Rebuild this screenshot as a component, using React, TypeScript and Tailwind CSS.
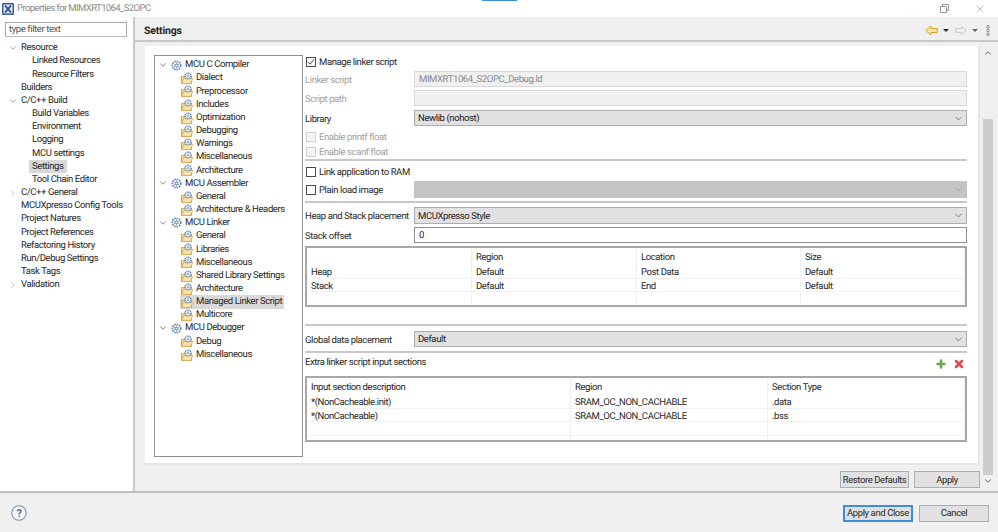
import { ChevronDown, ChevronRight, ChevronUp, Minus, X, Plus } from 'lucide-react'

const font = "[font-family:'Roboto',sans-serif] [text-rendering:geometricPrecision]"

type Node = { label: string; level: number; open?: boolean; closed?: boolean; selected?: boolean }

const nav: Node[] = [
  { label: 'Resource', level: 1, open: true },
  { label: 'Linked Resources', level: 2 },
  { label: 'Resource Filters', level: 2 },
  { label: 'Builders', level: 1 },
  { label: 'C/C++ Build', level: 1, open: true },
  { label: 'Build Variables', level: 2 },
  { label: 'Environment', level: 2 },
  { label: 'Logging', level: 2 },
  { label: 'MCU settings', level: 2 },
  { label: 'Settings', level: 2, selected: true },
  { label: 'Tool Chain Editor', level: 2 },
  { label: 'C/C++ General', level: 1, closed: true },
  { label: 'MCUXpresso Config Tools', level: 1 },
  { label: 'Project Natures', level: 1 },
  { label: 'Project References', level: 1 },
  { label: 'Refactoring History', level: 1 },
  { label: 'Run/Debug Settings', level: 1 },
  { label: 'Task Tags', level: 1 },
  { label: 'Validation', level: 1, closed: true },
]

const tools: Node[] = [
  { label: 'MCU C Compiler', level: 1 },
  { label: 'Dialect', level: 2 },
  { label: 'Preprocessor', level: 2 },
  { label: 'Includes', level: 2 },
  { label: 'Optimization', level: 2 },
  { label: 'Debugging', level: 2 },
  { label: 'Warnings', level: 2 },
  { label: 'Miscellaneous', level: 2 },
  { label: 'Architecture', level: 2 },
  { label: 'MCU Assembler', level: 1 },
  { label: 'General', level: 2 },
  { label: 'Architecture & Headers', level: 2 },
  { label: 'MCU Linker', level: 1 },
  { label: 'General', level: 2 },
  { label: 'Libraries', level: 2 },
  { label: 'Miscellaneous', level: 2 },
  { label: 'Shared Library Settings', level: 2 },
  { label: 'Architecture', level: 2 },
  { label: 'Managed Linker Script', level: 2, selected: true },
  { label: 'Multicore', level: 2 },
  { label: 'MCU Debugger', level: 1 },
  { label: 'Debug', level: 2 },
  { label: 'Miscellaneous', level: 2 },
]

function GearIcon() {
  return (
    <svg width="11" height="11" viewBox="0 0 11 11" className="shrink-0">
      <circle cx="5.5" cy="5.5" r="4.3" fill="#eef3f8" stroke="#5f83a8" strokeWidth="1.6" strokeDasharray="1.5 1" />
      <path d="M5.5 2.5v6M2.8 4l5.4 3M2.8 7l5.4-3" stroke="#6f8fb0" strokeWidth="0.8" />
      <circle cx="5.5" cy="5.5" r="1.2" fill="#fff" stroke="#47688c" strokeWidth="0.6" />
    </svg>
  )
}

function FolderIcon() {
  return (
    <svg width="12" height="12" viewBox="0 0 12 12" className="shrink-0">
      <path d="M0.5 11.5V4.5h2l1-1h2l1 1h4v7z" fill="#f6d58c" stroke="#c9953f" strokeWidth="0.8" />
      <path d="M0.7 11.5 2.7 6.5h9l-2 5z" fill="#fbe3a8" stroke="#d6a44f" strokeWidth="0.7" />
      <circle cx="7" cy="4" r="3" fill="#e9f0f6" stroke="#5f83a8" strokeWidth="1.3" strokeDasharray="1.2 0.8" />
      <circle cx="7" cy="4" r="1" fill="#fff" stroke="#47688c" strokeWidth="0.5" />
    </svg>
  )
}

function Check({ checked, disabled }: { checked?: boolean; disabled?: boolean }) {
  return (
    <span className={`flex h-[10px] w-[10px] shrink-0 items-center justify-center border ${disabled ? 'border-[#d0d0d0] bg-[#f4f4f4]' : 'border-[#4a4a4a] bg-white'}`}>
      {checked && (
        <svg width="8" height="8" viewBox="0 0 8 8">
          <path d="M1 4l2 2.2L7 1.2" fill="none" stroke="#333" strokeWidth="0.9" />
        </svg>
      )}
    </span>
  )
}

function Select({ value, height = 'h-4', disabled }: { value: string; height?: string; disabled?: boolean }) {
  return (
    <div className={`flex flex-1 items-center justify-between border pl-[3px] pr-[2px] text-[#222] ${height} ${disabled ? 'border-[#c4c4c4] bg-[#c4c4c4]' : 'border-[#adadad] bg-[#e1e1e1]'}`}>
      <span className="pt-[2px]">{value}</span>
      <ChevronDown size={11} strokeWidth={1.5} className={disabled ? 'text-[#999]' : 'text-[#555]'} />
    </div>
  )
}

function LabelRow({ label, muted, children, className }: { label: string; muted?: boolean; children: React.ReactNode; className?: string }) {
  return (
    <div className={`flex items-center ${className ?? ''}`}>
      <span className={`w-[109px] shrink-0 pt-[3px] ${muted ? 'text-[#a0a0a0]' : ''}`}>{label}</span>
      {children}
    </div>
  )
}

function CheckRow({ label, checked, disabled, className }: { label: string; checked?: boolean; disabled?: boolean; className?: string }) {
  return (
    <div className={`flex items-center gap-[3px] pl-[1px] ${disabled ? 'text-[#a0a0a0]' : ''} ${className ?? ''}`}>
      <Check checked={checked} disabled={disabled} />
      <span className="pt-[2px]">{label}</span>
    </div>
  )
}

function Rule({ className }: { className?: string }) {
  return <div className={`h-[2px] bg-[#c8c8c8] ${className ?? ''}`} />
}

function DataTable({ cols, header, rows, headerH, className }: { cols: string; header: string[]; rows: string[][]; headerH: string; className?: string }) {
  return (
    <div className={`flex flex-col overflow-hidden border-2 border-[#a8a8a8] bg-white ${className ?? ''}`}>
      <div className={`grid shrink-0 ${cols} ${headerH}`}>
        {header.map((h) => (
          <div key={h} className="flex items-center border-r border-[#f0f0f0] pl-[4px] pt-[2px]">{h}</div>
        ))}
      </div>
      {rows.map((r, i) => (
        <div key={i} className={`grid h-[13.5px] shrink-0 border-b border-[#f2f2f2] ${cols}`}>
          {r.map((c, j) => (
            <div key={j} className="flex items-center border-r border-[#f0f0f0] pl-[4px] pt-[3px] leading-none">{c}</div>
          ))}
        </div>
      ))}
    </div>
  )
}

export default function App() {
  return (
    <div className={`flex h-[532px] w-[998px] flex-col overflow-hidden whitespace-nowrap bg-[#f0f0f0] text-[9.5px] leading-[12px] tracking-[-0.4px] text-[#262626] ${font}`}>
      {/* title bar */}
      <div className="flex h-[17px] shrink-0 items-center bg-white pl-[2px]">
        <svg width="12" height="12" viewBox="0 0 12 12">
          <rect x="0" y="0" width="12" height="12" rx="1" fill="#3a5a9e" />
          <rect x="1.5" y="1.5" width="9" height="9" fill="#dfe6f4" />
          <path d="M3 2.5l6 7M9 2.5l-6 7" stroke="#24407e" strokeWidth="1.7" />
        </svg>
        <span className="ml-[3px] pt-[1px] tracking-[-0.6px] text-[#8a8a8a]">Properties for MIMXRT1064_S2OPC</span>
        <div className="ml-auto flex items-center">
          <Minus size={9} strokeWidth={1} className="mr-[24px] text-[#eeeeee]" />
          <svg width="9" height="9" viewBox="0 0 9 9" className="mr-[25px]">
            <path d="M0.5 2.5h6v6h-6zM2.5 2.5v-2h6v6h-2" fill="none" stroke="#8a8a8a" strokeWidth="0.9" />
          </svg>
          <X size={12} strokeWidth={0.9} className="mr-[12px] text-[#777]" />
        </div>
      </div>

      {/* main */}
      <div className="flex h-[476px] shrink-0 border-b-2 border-[#c0c0c0]">
        {/* left nav */}
        <div className="w-[133px] shrink-0 bg-white pl-[5px] pt-[5px]">
          <div className="flex h-[15px] w-[122px] items-center border border-[#a8a8a8] border-b-[#bdbdbd] pl-[3px] pt-[1px] text-[#555]">type filter text</div>
          <div className="mt-[4.5px] -ml-[5px]">
            {nav.map((n) => (
              <div key={n.label} className="relative flex h-[13.16px] items-center leading-none">
                {n.open && <ChevronDown size={10} strokeWidth={1.4} className="absolute left-[8px] text-[#555]" />}
                {n.closed && <ChevronRight size={10} strokeWidth={1.4} className="absolute left-[8px] text-[#999]" />}
                <span className={n.level === 1 ? 'ml-[18px]' : 'ml-[29px]'}>
                  <span className={`px-[3px] py-[1px] ${n.selected ? 'bg-[#d9d9d9]' : ''}`}>{n.label}</span>
                </span>
              </div>
            ))}
          </div>
        </div>
        <div className="w-[2px] shrink-0 bg-[#c8c8c8]" />

        {/* page */}
        <div className="flex min-w-0 flex-1 flex-col">
          <div className="flex h-[25px] shrink-0 items-center border-b-2 border-[#c8c8c8] pl-[9px] pr-[8px] pt-[3px]">
            <span className="pt-[2px] text-[10.5px] font-bold tracking-[-0.2px]">Settings</span>
            <div className="ml-auto flex items-center">
              <svg width="13" height="11" viewBox="0 0 13 11">
                <path d="M0.8 5.5 6 1v2.5h6.2v4H6V10z" fill="#fce7a8" stroke="#d49e2f" strokeWidth="1" />
              </svg>
              <svg width="6" height="3" viewBox="0 0 6 3" className="ml-[5px]"><path d="M0 0h6L3 3z" fill="#222" /></svg>
              <svg width="12" height="11" viewBox="0 0 13 11" className="ml-[6px]">
                <path d="M12.2 5.5 7 1v2.5H0.8v4H7V10z" fill="#f4f4f4" stroke="#c4c4c4" strokeWidth="1" />
              </svg>
              <svg width="6" height="3" viewBox="0 0 6 3" className="ml-[5px]"><path d="M0 0h6L3 3z" fill="#666" /></svg>
              <svg width="4" height="11" viewBox="0 0 4 11" className="ml-[8px]">
                <g fill="none" stroke="#777" strokeWidth="0.8">
                  <circle cx="2" cy="1.8" r="1.3" />
                  <circle cx="2" cy="5.5" r="1.3" />
                  <circle cx="2" cy="9.2" r="1.3" />
                </g>
              </svg>
            </div>
          </div>

          <div className="flex min-h-0 flex-1 pl-[10px] pr-[4px] pt-[4px]">
            <div className="flex w-[835px] shrink-0 flex-col">
              <div className="flex h-[419px] shrink-0 border-b-2 border-r-2 border-[#e6e6e6] bg-white pl-[9px] pt-[9px]">
                {/* tool tree */}
                <div className="h-[402px] w-[149px] shrink-0 border border-[#8f8f8f] pt-[2.5px]">
                  {tools.map((n, i) => (
                    <div key={i} className="relative flex h-[13.16px] items-center leading-none">
                      {n.level === 1 ? (
                        <>
                          <ChevronDown size={10} strokeWidth={1.6} className="absolute left-[3px] text-[#444]" />
                          <span className="ml-[16px]"><GearIcon /></span>
                          <span className="ml-[3px]">{n.label}</span>
                        </>
                      ) : (
                        <div className={`ml-[25px] flex h-[14px] items-center gap-[3px] pl-[1px] pr-[2px] ${n.selected ? 'bg-[#d9d9d9]' : ''}`}>
                          <FolderIcon />
                          <span>{n.label}</span>
                        </div>
                      )}
                    </div>
                  ))}
                </div>

                {/* form */}
                <div className="ml-[2px] -mt-[1px] flex w-[662px] shrink-0 flex-col">
                  <CheckRow label="Manage linker script" checked className="h-[16px]" />
                  <LabelRow label="Linker script" muted className="mt-[1px]">
                    <div className="flex h-4 flex-1 items-center border border-[#d9d9d9] bg-[#f0f0f0] pl-[4px] pt-[1px] text-[#8a8a8a]">MIMXRT1064_S2OPC_Debug.ld</div>
                  </LabelRow>
                  <LabelRow label="Script path" muted className="mt-[3px]">
                    <div className="h-4 flex-1 border border-[#d9d9d9] bg-[#f0f0f0]" />
                  </LabelRow>
                  <LabelRow label="Library" className="mt-[4px]">
                    <Select value="Newlib (nohost)" />
                  </LabelRow>
                  <CheckRow label="Enable printf float" disabled className="mt-[3px] h-[15px]" />
                  <CheckRow label="Enable scanf float" disabled className="h-[15px]" />
                  <Rule />
                  <CheckRow label="Link application to RAM" className="mt-[2px] h-[17px]" />
                  <div className="mt-[1px] flex items-center">
                    <CheckRow label="Plain load image" className="w-[109px] shrink-0" />
                    <Select value="" height="h-[17px]" disabled />
                  </div>
                  <Rule className="mt-[3px]" />
                  <LabelRow label="Heap and Stack placement" className="mt-[4px]">
                    <Select value="MCUXpresso Style" height="h-[17px]" />
                  </LabelRow>
                  <LabelRow label="Stack offset" className="mt-[3px]">
                    <div className="flex h-4 flex-1 items-center border border-[#8f8f8f] bg-white pl-[4px] pt-[1px]">0</div>
                  </LabelRow>
                  <DataTable
                    className="mt-[3px] h-[61px]"
                    cols="grid-cols-[165px_165px_164px_1fr]"
                    headerH="h-[17px]"
                    header={['', 'Region', 'Location', 'Size']}
                    rows={[
                      ['Heap', 'Default', 'Post Data', 'Default'],
                      ['Stack', 'Default', 'End', 'Default'],
                      ['', '', '', ''],
                    ]}
                  />
                  <Rule className="mt-[17px]" />
                  <LabelRow label="Global data placement" className="mt-[5px]">
                    <Select value="Default" />
                  </LabelRow>
                  <Rule className="mt-[4px]" />
                  <div className="mt-[1px] flex h-[19px] items-start justify-between">
                    <span className="pt-[3px]">Extra linker script input sections</span>
                    <div className="mr-[2px] mt-[4px] flex items-center gap-[6px]">
                      <Plus size={12} strokeWidth={5} className="text-[#6aa84a]" />
                      <X size={12} strokeWidth={5} className="text-[#e0474c]" />
                    </div>
                  </div>
                  <DataTable
                    className="mt-[3px] h-[66px]"
                    cols="grid-cols-[264px_197px_1fr]"
                    headerH="h-[17px]"
                    header={['Input section description', 'Region', 'Section Type']}
                    rows={[
                      ['*(NonCacheable.init)', 'SRAM_OC_NON_CACHABLE', '.data'],
                      ['*(NonCacheable)', 'SRAM_OC_NON_CACHABLE', '.bss'],
                      ['', '', ''],
                      ['', '', ''],
                    ]}
                  />
                </div>
              </div>
              <div className="mt-[6px] flex justify-end gap-[5px]">
                <button className="h-[17px] w-[69px] border border-[#adadad] bg-[#e1e1e1] pt-[1px] leading-none">Restore Defaults</button>
                <button className="h-[17px] w-[66px] border border-[#adadad] bg-[#e1e1e1] pt-[1px] leading-none">Apply</button>
              </div>
            </div>

            {/* scrollbar */}
            <div className="ml-[3px] flex h-[440px] w-[10px] shrink-0 flex-col items-center">
              <ChevronUp size={10} strokeWidth={2} className="mt-[2px] text-[#444]" />
              <div className="mt-[61px] h-[357px] w-[10px] bg-[#cdcdcd]" />
              <ChevronDown size={10} strokeWidth={2} className="mt-[1px] text-[#444]" />
            </div>
          </div>
        </div>
      </div>

      {/* footer */}
      <div className="flex flex-1 items-center pl-[11px] pr-[9px]">
        <svg width="16" height="16" viewBox="0 0 16 16">
          <circle cx="8" cy="8" r="7.2" fill="#f4f6f9" stroke="#7f93ad" strokeWidth="1.1" />
          <text x="8" y="12" textAnchor="middle" fontSize="11" fontWeight="700" fill="#5a6f8c">?</text>
        </svg>
        <div className="ml-auto flex gap-[6px] pt-[1px]">
          <button className="h-[17px] w-[70px] border-2 border-[#3c8fdc] bg-[#e1e1e1] leading-none">Apply and Close</button>
          <button className="h-[17px] w-[70px] border border-[#adadad] bg-[#e1e1e1] leading-none">Cancel</button>
        </div>
      </div>
      <div className="absolute left-[482px] top-0 h-[1px] w-[35px] bg-[#3c8fdc]" />
    </div>
  )
}
